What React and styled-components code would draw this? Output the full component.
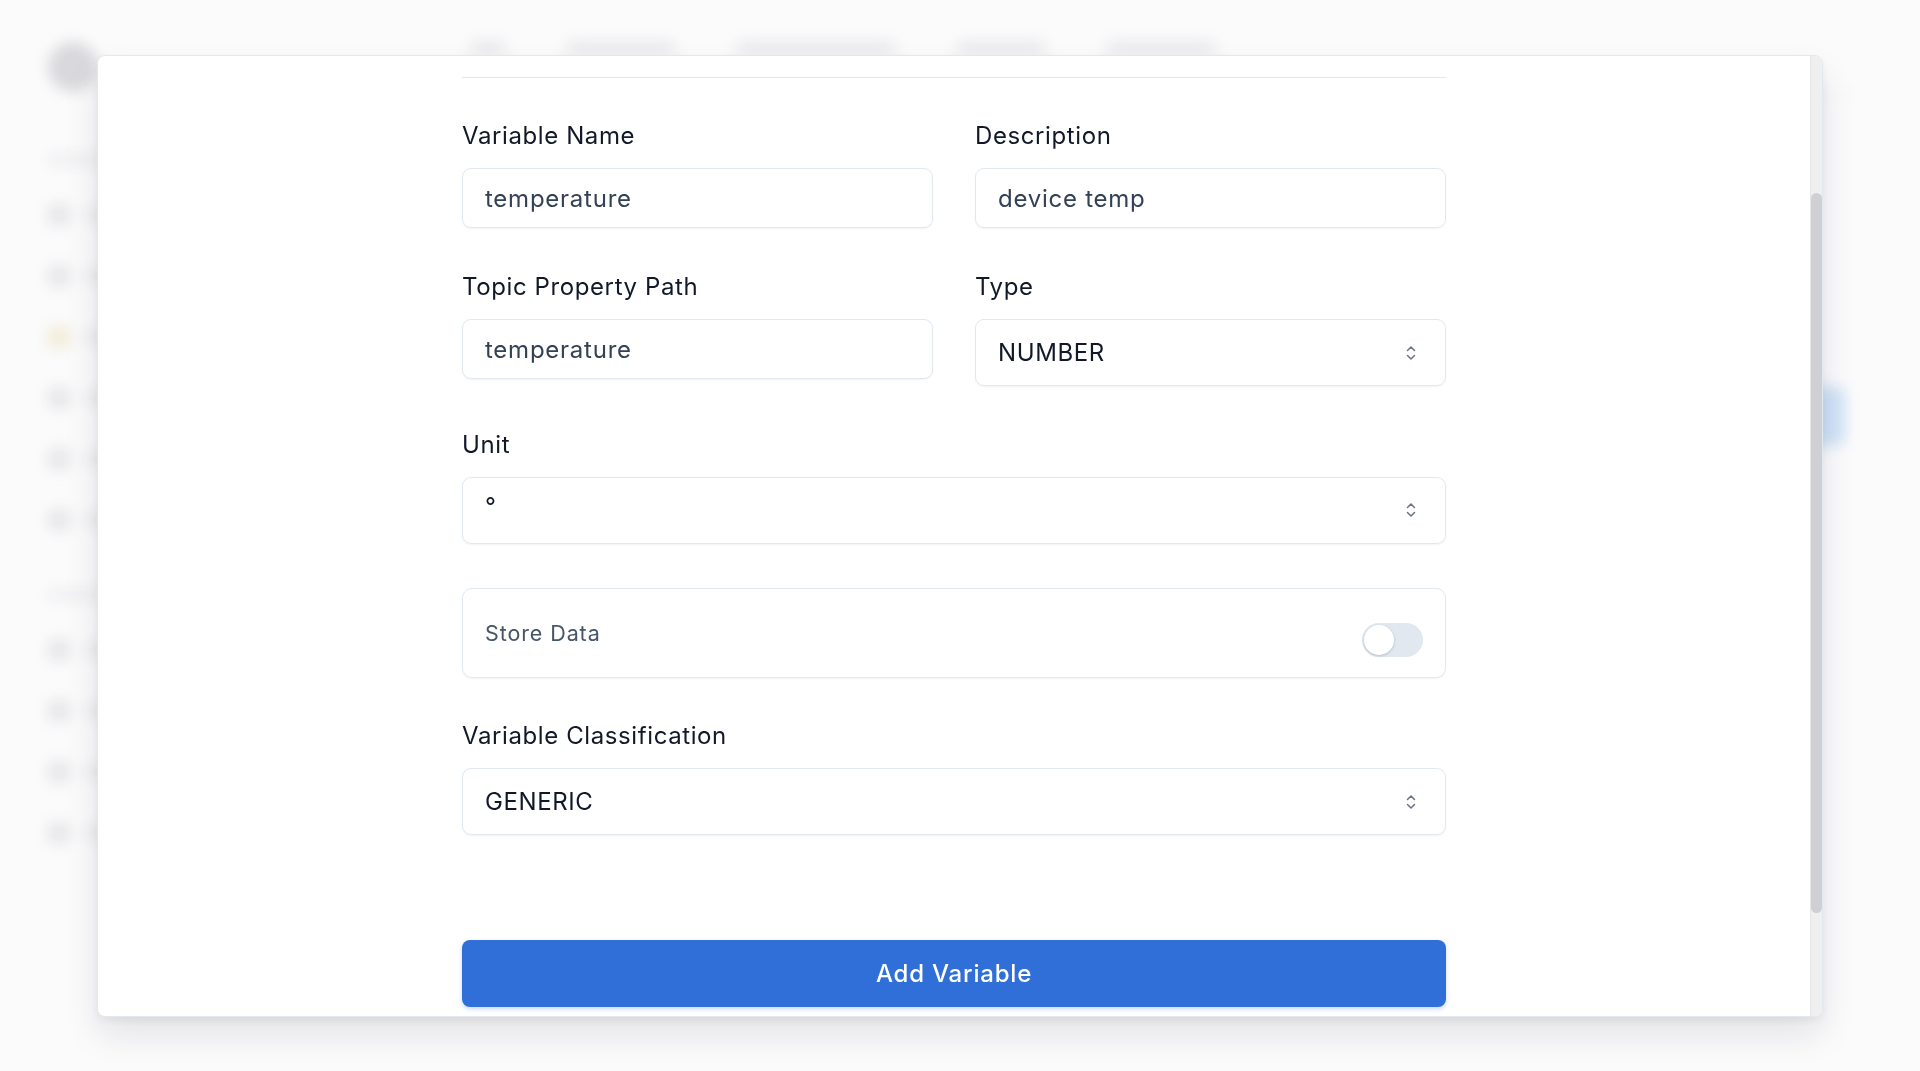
import React from "react";
import styled, { createGlobalStyle } from "styled-components";

const GlobalStyle = createGlobalStyle`
  html, body {
    margin: 0;
    padding: 0;
    height: 100%;
    background: #fbfbfc;
    font-family: Inter, "Noto Sans", "Liberation Sans", sans-serif;
    overflow: hidden;
  }
  * { box-sizing: border-box; }
`;

/* blurred app behind the dialog */
const Backdrop = styled.div`
  position: fixed;
  inset: 0;
  display: flex;
  filter: blur(7px);
  opacity: 0.55;
  pointer-events: none;
`;

const Sidebar = styled.aside`
  width: 130px;
  padding: 42px 0 0 48px;
  display: flex;
  flex-direction: column;
  gap: 39px;
`;

const Avatar = styled.div`
  width: 50px;
  height: 50px;
  border-radius: 50%;
  background: #bdbdc2;
  margin-bottom: 24px;
`;

const SectionTag = styled.div`
  width: 60px;
  height: 10px;
  border-radius: 5px;
  background: #e2e2e6;
  margin-top: ${(p) => p.$gap || 0}px;
`;

const SideItem = styled.div`
  display: flex;
  align-items: center;
  gap: 14px;

  &::before {
    content: "";
    width: 22px;
    height: 22px;
    border-radius: 6px;
    background: ${(p) => p.$tint || "#d6d6da"};
  }
  &::after {
    content: "";
    width: 40px;
    height: 12px;
    border-radius: 6px;
    background: #dedee2;
  }
`;

const MainBg = styled.div`
  flex: 1;
  display: flex;
  flex-direction: column;
`;

const TopBar = styled.div`
  height: 96px;
  display: flex;
  align-items: center;
  gap: 60px;
  padding-left: 340px;
  border-bottom: 1px solid #eceef2;
`;

const Crumb = styled.div`
  height: 14px;
  width: ${(p) => p.$w}px;
  border-radius: 7px;
  background: #dcdce0;
`;

const BgContent = styled.div`
  flex: 1;
  display: flex;
  justify-content: flex-end;
  padding: 290px 75px 0 0;
`;

const BgButton = styled.div`
  width: 60px;
  height: 60px;
  border-radius: 10px;
  background: #a9cdf2;
`;

/* dialog */
const Overlay = styled.div`
  position: fixed;
  inset: 0;
  display: flex;
  align-items: center;
  justify-content: center;
`;

const Modal = styled.div`
  width: 1726px;
  height: 962px;
  display: flex;
  background: #ffffff;
  border: 1px solid #e3e8f0;
  border-radius: 8px;
  box-shadow: 0 18px 34px rgba(15, 23, 42, 0.1), 0 4px 10px rgba(15, 23, 42, 0.06);
  overflow: hidden;
`;

const Body = styled.div`
  flex: 1;
  display: flex;
  justify-content: center;
  overflow: hidden;
`;

const Form = styled.form`
  width: 984px;
  padding-top: 21px;
  display: flex;
  flex-direction: column;
  gap: 43.8px;
`;

const Divider = styled.hr`
  margin: 0;
  border: 0;
  border-top: 1px solid #e2e8f0;
`;

const Row = styled.div`
  display: grid;
  grid-template-columns: 1fr 1fr;
  column-gap: 42px;
  align-items: start;
`;

const Field = styled.label`
  display: flex;
  flex-direction: column;
  gap: 17px;
`;

const Label = styled.span`
  font-size: 24px;
  line-height: 30px;
  color: #111827;
  letter-spacing: 0.6px;
`;

const TextInput = styled.div`
  height: 60px;
  display: flex;
  align-items: center;
  padding: 0 22px;
  border: 1.5px solid #e2e8f0;
  border-radius: 9px;
  box-shadow: 0 1px 2px rgba(15, 23, 42, 0.05);
  font-size: 24px;
  color: #334155;
  letter-spacing: 0.75px;
`;

const Select = styled.div`
  height: 67px;
  display: flex;
  align-items: center;
  justify-content: space-between;
  padding: 0 28px 0 22px;
  border: 1.5px solid #e2e8f0;
  border-radius: 9px;
  box-shadow: 0 1px 2px rgba(15, 23, 42, 0.05);
  font-size: 24px;
  color: #111827;
  letter-spacing: 0.6px;
`;

const SelectValue = styled.span`
  transform: translateY(${(p) => p.$shift || 0}px);
`;

const ToggleCard = styled.div`
  height: 90px;
  display: flex;
  align-items: center;
  justify-content: space-between;
  padding: 0 22px;
  border: 1.5px solid #e2e8f0;
  border-radius: 10px;
  box-shadow: 0 1px 2px rgba(15, 23, 42, 0.05);
`;

const ToggleText = styled.span`
  font-size: 21.5px;
  color: #475569;
  letter-spacing: 0.9px;
`;

const Switch = styled.span`
  width: 61px;
  height: 34px;
  margin-top: 14px;
  padding: 2px;
  display: flex;
  align-items: center;
  border-radius: 17px;
  background: #e2e8f0;

  &::before {
    content: "";
    width: 30px;
    height: 30px;
    border-radius: 50%;
    background: #ffffff;
    box-shadow: 0 1px 3px rgba(15, 23, 42, 0.2);
  }
`;

const SubmitButton = styled.button`
  margin-top: 61px;
  height: 67px;
  border: 0;
  border-radius: 8px;
  background: #2f6fd7;
  color: #ffffff;
  font-family: inherit;
  font-size: 24px;
  font-weight: 500;
  letter-spacing: 0.8px;
  box-shadow: 0 2px 4px rgba(37, 99, 235, 0.25);
  cursor: pointer;
`;

const ScrollTrack = styled.div`
  width: 12px;
  background: #efefef;
  border-left: 1px solid #e6e6e6;
  padding-top: 137px;
`;

const ScrollThumb = styled.div`
  height: 720px;
  border-radius: 6px;
  background: #cfcfd4;
`;

const UpDownIcon = () => (
  <svg width="12" height="18" viewBox="0 0 12 18" fill="none" stroke="#6b7280" strokeWidth="1.5" strokeLinecap="round" strokeLinejoin="round">
    <path d="M2.5 6.5 L6 3 L9.5 6.5" />
    <path d="M2.5 11.5 L6 15 L9.5 11.5" />
  </svg>
);

const App = () => {
  return (
    <>
      <GlobalStyle />
      <Backdrop>
        <Sidebar>
          <Avatar />
          <SectionTag />
          <SideItem />
          <SideItem />
          <SideItem $tint="#eadfb8" />
          <SideItem />
          <SideItem />
          <SideItem />
          <SectionTag $gap={20} />
          <SideItem />
          <SideItem />
          <SideItem />
          <SideItem />
        </Sidebar>
        <MainBg>
          <TopBar>
            <Crumb $w={36} />
            <Crumb $w={110} />
            <Crumb $w={160} />
            <Crumb $w={90} />
            <Crumb $w={110} />
          </TopBar>
          <BgContent>
            <BgButton />
          </BgContent>
        </MainBg>
      </Backdrop>

      <Overlay>
        <Modal>
          <Body>
            <Form onSubmit={(e) => e.preventDefault()}>
              <Divider />
              <Row>
                <Field>
                  <Label>Variable Name</Label>
                  <TextInput>temperature</TextInput>
                </Field>
                <Field>
                  <Label>Description</Label>
                  <TextInput>device temp</TextInput>
                </Field>
              </Row>
              <Row>
                <Field>
                  <Label>Topic Property Path</Label>
                  <TextInput>temperature</TextInput>
                </Field>
                <Field>
                  <Label>Type</Label>
                  <Select>
                    <SelectValue>NUMBER</SelectValue>
                    <UpDownIcon />
                  </Select>
                </Field>
              </Row>
              <Field>
                <Label>Unit</Label>
                <Select>
                  <SelectValue $shift={-4}>°</SelectValue>
                  <UpDownIcon />
                </Select>
              </Field>
              <ToggleCard>
                <ToggleText>Store Data</ToggleText>
                <Switch />
              </ToggleCard>
              <Field>
                <Label>Variable Classification</Label>
                <Select>
                  <SelectValue>GENERIC</SelectValue>
                  <UpDownIcon />
                </Select>
              </Field>
              <SubmitButton type="submit">Add Variable</SubmitButton>
            </Form>
          </Body>
          <ScrollTrack>
            <ScrollThumb />
          </ScrollTrack>
        </Modal>
      </Overlay>
    </>
  );
};

export default App;
